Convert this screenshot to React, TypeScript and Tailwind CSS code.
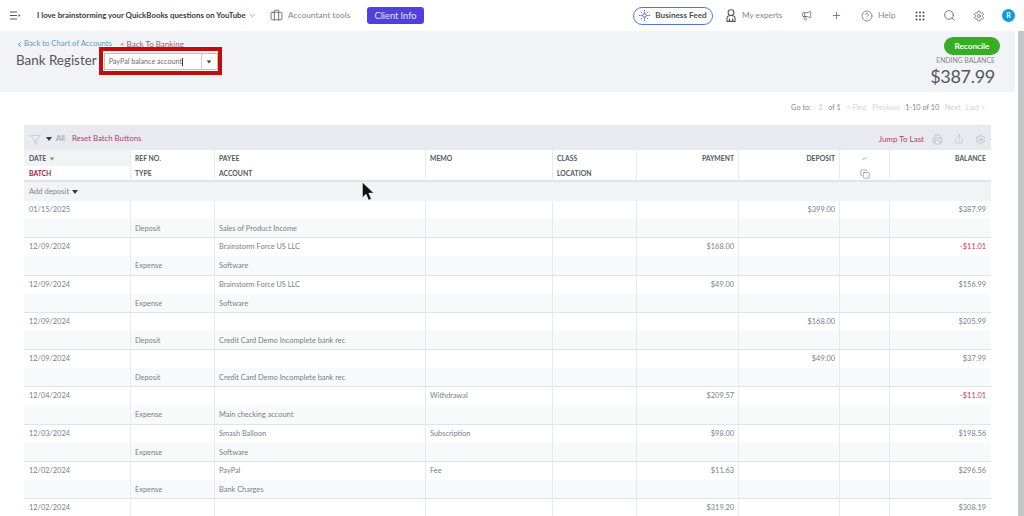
import { Briefcase, Check, ChevronDown, ChevronLeft, CircleHelp, Copy, Filter, Grip, Megaphone, Plus, Printer, Search, Settings, Share } from 'lucide-react'

const cols = 'grid grid-cols-[107px_84px_211px_127px_84px_102px_101px_50px_101px]'
const cell = 'border-r border-[#e8eaee] px-[4px] truncate'
const firstCell = 'border-r border-[#e8eaee] px-[5px] truncate'
const lastCell = 'px-[5px] truncate'

type Entry = {
  date: string
  type: string
  payee: string
  account: string
  memo: string
  payment: string
  deposit: string
  balance: string
  negative?: boolean
}

const entries: Entry[] = [
  { date: '01/15/2025', type: 'Deposit', payee: '', account: 'Sales of Product Income', memo: '', payment: '', deposit: '$399.00', balance: '$387.99' },
  { date: '12/09/2024', type: 'Expense', payee: 'Brainstorm Force US LLC', account: 'Software', memo: '', payment: '$168.00', deposit: '', balance: '-$11.01', negative: true },
  { date: '12/09/2024', type: 'Expense', payee: 'Brainstorm Force US LLC', account: 'Software', memo: '', payment: '$49.00', deposit: '', balance: '$156.99' },
  { date: '12/09/2024', type: 'Deposit', payee: '', account: 'Credit Card Demo Incomplete bank rec', memo: '', payment: '', deposit: '$168.00', balance: '$205.99' },
  { date: '12/09/2024', type: 'Deposit', payee: '', account: 'Credit Card Demo Incomplete bank rec', memo: '', payment: '', deposit: '$49.00', balance: '$37.99' },
  { date: '12/04/2024', type: 'Expense', payee: '', account: 'Main checking account', memo: 'Withdrawal', payment: '$209.57', deposit: '', balance: '-$11.01', negative: true },
  { date: '12/03/2024', type: 'Expense', payee: 'Smash Balloon', account: 'Software', memo: 'Subscription', payment: '$98.00', deposit: '', balance: '$198.56' },
  { date: '12/02/2024', type: 'Expense', payee: 'PayPal', account: 'Bank Charges', memo: 'Fee', payment: '$11.63', deposit: '', balance: '$296.56' },
  { date: '12/02/2024', type: '', payee: '', account: '', memo: '', payment: '$319.20', deposit: '', balance: '$308.19' },
]

function Caret({ className = '' }: { className?: string }) {
  return <span className={`inline-block h-0 w-0 border-x-[3px] border-t-[4px] border-x-transparent border-t-[#393a3d] ${className}`} />
}

function TopBar() {
  return (
    <header className="flex h-[31px] items-center justify-between whitespace-nowrap bg-white pl-[10px] pr-[9px] text-[#6b6c72]">
      <div className="flex items-center">
        <svg width="11" height="9" viewBox="0 0 11 9" className="text-[#55565b]" fill="none" stroke="currentColor" strokeWidth="1">
          <path d="M0 1h7M0 4.5h7M0 8h7" />
          <path d="M8.5 3l2 1.5-2 1.5z" fill="currentColor" stroke="none" />
        </svg>
        <span className="ml-[16px] w-[209px] text-[7.85px] font-bold text-[#393a3d]">I love brainstorming your QuickBooks questions on YouTube</span>
        <ChevronDown size={9} className="ml-[2px]" strokeWidth={1.5} />
        <Briefcase size={13} className="ml-[13px] text-[#55565b]" strokeWidth={1.5} />
        <span className="ml-[5px] w-[63px] text-[8.4px] text-[#85868b]">Accountant tools</span>
        <button type="button" className="ml-[16px] flex h-[17px] w-[57px] items-center justify-center rounded-[3px] bg-[#5140e0] text-[9.2px] text-[#e6e3ff]">
          Client Info
        </button>
      </div>
      <div className="flex items-center">
        <button type="button" className="flex h-[18px] w-[80px] items-center justify-center gap-[5px] rounded-full border border-[#4a78e0] text-[8.2px] font-bold text-[#4c4d52]">
          <svg width="11" height="11" viewBox="0 0 11 11" fill="none" stroke="#4a6fdc" strokeWidth="1">
            <path d="M5.5 2.5l.9 2.1 2.1.9-2.1.9-.9 2.1-.9-2.1-2.1-.9 2.1-.9z" />
            <path d="M5.5 0v1.5M5.5 9.5V11M0 5.5h1.5M9.5 5.5H11M1.8 1.8l1 1M9.2 1.8l-1 1M1.8 9.2l1-1M9.2 9.2l-1-1" />
          </svg>
          Business Feed
        </button>
        <svg width="10" height="13" viewBox="0 0 10 13" className="ml-[13px] text-[#55565b]" fill="none" stroke="currentColor" strokeWidth="1.1">
          <circle cx="5" cy="3.6" r="2.9" />
          <path d="M1 12.4V9.2c0-1.6 1.4-2.7 4-2.7s4 1.1 4 2.7v3.2zM3.4 9.6v2.8M6.6 9.6v2.8" />
        </svg>
        <span className="ml-[6px] w-[40px] text-[8.2px] text-[#85868b]">My experts</span>
        <Megaphone size={11} className="ml-[19px] text-[#55565b]" strokeWidth={1.5} />
        <Plus size={11} className="ml-[19px] text-[#55565b]" strokeWidth={1.6} />
        <CircleHelp size={12} className="ml-[19px] text-[#55565b]" strokeWidth={1.3} />
        <span className="ml-[5px] w-[18px] text-[8.4px] text-[#85868b]">Help</span>
        <Grip size={12} className="ml-[18px] text-[#55565b]" strokeWidth={2.2} />
        <Search size={13} className="ml-[17px] text-[#55565b]" strokeWidth={1.4} />
        <Settings size={12} className="ml-[17px] text-[#55565b]" strokeWidth={1.4} />
        <span className="ml-[17px] flex h-[13px] w-[13px] items-center justify-center rounded-full bg-[#0d9bdc] text-[7px] font-bold text-white">R</span>
      </div>
    </header>
  )
}

function RegisterHeader() {
  return (
    <section className="flex h-[61px] items-start justify-between bg-[#f1f3f6] pl-[16px] pr-[15px]">
      <div className="pt-[8px]">
        <div className="flex h-[10px] items-center text-[7.7px]">
          <ChevronLeft size={7} strokeWidth={3} className="text-[#33658f]" />
          <span className="ml-[1px] text-[#5d9bc2]">Back to Chart of Accounts</span>
          <span className="ml-[8px] text-[8px] text-[#b0566f]">&lt; Back To Banking</span>
        </div>
        <div className="mt-[4px] flex items-center">
          <h1 className="-mt-[2px] text-[13.4px] leading-[17px] text-[#55565b]">Bank Register</h1>
          <div className="relative ml-[7px] flex h-[17px] w-[114px] items-center border border-[#a8d3a4] bg-white text-[7.2px] text-[#6b6c72]">
            <span className="flex flex-1 items-center pl-[4px] pt-[1px]">
              PayPal balance account
              <span className="h-[8px] w-px bg-[#393a3d]" />
            </span>
            <span className="flex h-full w-[16px] items-center justify-center border-l border-[#c9cbd0]">
              <Caret className="scale-75" />
            </span>
            <span className="pointer-events-none absolute -bottom-[6px] -left-[6px] -right-[5px] -top-[7px] border-[4px] border-[#c00d0d]" />
          </div>
        </div>
      </div>
      <div className="flex flex-col items-end pt-[6px]">
        <button type="button" className="flex h-[18px] w-[56px] items-center justify-center rounded-full bg-[#37ac25] text-[8.2px] font-bold text-white">
          Reconcile
        </button>
        <div className="mr-[5px] mt-[1px] text-[6.8px] leading-[9px] text-[#85868b]">ENDING BALANCE</div>
        <div className="mr-[5px] text-[18px] leading-[22px] tracking-[-0.3px] text-[#55565b]">$387.99</div>
      </div>
    </section>
  )
}

function Pager() {
  return (
    <div className="flex h-[33px] items-center justify-end gap-[5.5px] pb-[1px] pr-[30px] text-[7.3px] text-[#85868b]">
      <span>Go to:</span>
      <span className="ml-[2px] text-[#c3c5ca]">1</span>
      <span>of 1</span>
      <span className="text-[#d0d2d6]">&lt; First</span>
      <span className="text-[#d0d2d6]">Previous</span>
      <span>1-10 of 10</span>
      <span className="text-[#d0d2d6]">Next</span>
      <span className="text-[#d0d2d6]">Last &gt;</span>
    </div>
  )
}

function TableToolbar() {
  return (
    <div className="flex h-[25px] items-center bg-[#e8eaef] pl-[6px] pr-[5px] pt-[3px] text-[7.8px]">
      <Filter size={11} strokeWidth={1} className="text-[#a9abb0]" />
      <Caret className="ml-[5px]" />
      <span className="ml-[4px] text-[#9a9ba0]">All</span>
      <span className="ml-[7px] text-[#a8475f]">Reset Batch Buttons</span>
      <span className="ml-auto text-[8px] text-[#b8405f]">Jump To Last</span>
      <Printer size={11} strokeWidth={1} className="ml-[8px] text-[#a0a2a7]" />
      <Share size={10} strokeWidth={1} className="ml-[11px] text-[#a0a2a7]" />
      <Settings size={11} strokeWidth={1} className="ml-[11px] text-[#a0a2a7]" />
    </div>
  )
}

function TableHead() {
  const line = 'h-[15px] leading-[15px]'
  return (
    <div className={`${cols} h-[32px] border-b-2 border-[#e1e3e8] text-[6.8px] font-bold text-[#55565b]`}>
      <div className="border-r border-[#e8eaee]">
        <div className="flex h-[16px] items-center bg-[#f1f3f6] px-[5px] pt-[1px] font-bold">
          DATE
          <Caret className="ml-[3px] scale-75 border-t-[#85868b]" />
        </div>
        <div className={`${line} px-[5px] text-[#9c1a36]`}>BATCH</div>
      </div>
      {[['REF NO.', 'TYPE'], ['PAYEE', 'ACCOUNT'], ['MEMO', ''], ['CLASS', 'LOCATION']].map(([a, b]) => (
        <div key={a} className={`${cell} pt-[1px]`}>
          <div className={line}>{a}</div>
          <div className="h-[14px] leading-[14px]">{b}</div>
        </div>
      ))}
      <div className={`${cell} pt-[1px] text-right leading-[15px]`}>PAYMENT</div>
      <div className={`${cell} pt-[1px] text-right leading-[15px]`}>DEPOSIT</div>
      <div className="flex flex-col items-center border-r border-[#e8eaee] pt-[6px] text-[#55565b]">
        <Check size={5} strokeWidth={2.5} />
        <Copy size={10} strokeWidth={1.4} className="mt-[8px] text-[#5a7fa0]" />
      </div>
      <div className={`${lastCell} pt-[1px] text-right leading-[15px]`}>BALANCE</div>
    </div>
  )
}

function EntryRow({ entry }: { entry: Entry }) {
  const topCell = `${cell} h-[18px] leading-[18px]`
  const subCell = `${cell} h-[18.25px] leading-[19px]`
  return (
    <div className="border-b border-[#e1e3e8] text-[7.4px] text-[#7d7e83]">
      <div className={cols}>
        <div className={`${firstCell} h-[18px] leading-[18px]`}>{entry.date}</div>
        <div className={topCell} />
        <div className={topCell}>{entry.payee}</div>
        <div className={topCell}>{entry.memo}</div>
        <div className={topCell} />
        <div className={`${topCell} text-right`}>{entry.payment}</div>
        <div className={`${topCell} text-right`}>{entry.deposit}</div>
        <div className={topCell} />
        <div className={`${lastCell} h-[18px] text-right leading-[18px] ${entry.negative ? 'text-[#d0334f]' : ''}`}>{entry.balance}</div>
      </div>
      <div className={`${cols} bg-[#f8f9fb]`}>
        <div className={subCell} />
        <div className={subCell}>{entry.type}</div>
        <div className={subCell}>{entry.account}</div>
        <div className={subCell} />
        <div className={subCell} />
        <div className={subCell} />
        <div className={subCell} />
        <div className={subCell} />
        <div className="h-[18.25px]" />
      </div>
    </div>
  )
}

export default function App() {
  return (
    <div className="relative h-[516px] w-[1024px] overflow-hidden bg-white font-['Lato',sans-serif]">
      <TopBar />
      <div className="flex h-[485px]">
        <main className="w-[1015px] shrink-0">
          <RegisterHeader />
          <Pager />
          <div className="ml-[24px] w-[967px]">
            <TableToolbar />
            <TableHead />
            <div className="flex h-[19px] items-center bg-[#f1f3f6] pl-[5px] text-[7.6px] text-[#85868b]">
              Add deposit
              <Caret className="ml-[3px]" />
            </div>
            {entries.map((entry, i) => (
              <EntryRow key={i} entry={entry} />
            ))}
          </div>
        </main>
        <div className="ml-[3px] w-[6px] bg-[#c4c5c8]" />
      </div>
      {/* mouse pointer captured in the recording */}
      <svg width="13" height="21" viewBox="0 0 13 21" className="absolute left-[362px] top-[182px]">
        <path d="M0.5 0.5v15l3.6-3.4 2.5 6 2.6-1.1-2.5-5.9h5z" fill="#111" stroke="#fff" strokeWidth="0.4" />
      </svg>
    </div>
  )
}
